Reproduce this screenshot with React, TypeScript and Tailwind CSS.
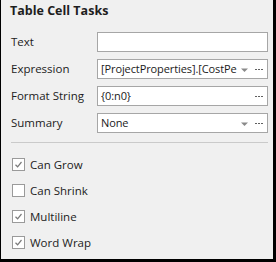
import React from "react";

const font = { fontFamily: '"Open Sans", "Noto Sans", sans-serif' };

const Dots = () => (
  <svg width="8" height="3" viewBox="0 0 8 3" className="shrink-0">
    <rect x="0" y="1" width="2" height="1" fill="#606060" />
    <rect x="3" y="1" width="2" height="1" fill="#606060" />
    <rect x="6" y="1" width="2" height="1" fill="#606060" />
  </svg>
);

const Arrow = () => (
  <svg width="7" height="4" viewBox="0 0 7 4" className="shrink-0">
    <path d="M0 0.5 H7 L3.5 4 Z" fill="#8a8a8a" />
  </svg>
);

const Row = ({
  label,
  value,
  arrow,
  dots,
}: {
  label: string;
  value?: string;
  arrow?: boolean;
  dots?: boolean;
}) => (
  <div className="flex h-[20px] items-center">
    <div className="w-[86px] text-[11.5px] text-[#222]">{label}</div>
    <div className="flex h-[20px] w-[171px] items-center border border-[#a6a6a6] bg-white pl-[3px] pr-[4px]">
      <div className="flex-1 overflow-hidden whitespace-nowrap text-[11px] tracking-[-0.1px] text-[#1a1a1a]">
        {value}
      </div>
      {arrow && (
        <div className="ml-[2px] mr-[7px] mt-[1px]">
          <Arrow />
        </div>
      )}
      {dots && <Dots />}
    </div>
  </div>
);

const Check = ({ label, checked }: { label: string; checked?: boolean }) => (
  <div className="flex h-[13px] items-center">
    <div className="ml-[1px] flex h-[13px] w-[13px] items-center justify-center border border-[#9a9a9a] bg-white">
      {checked && (
        <svg width="9" height="9" viewBox="0 0 9 9">
          <path d="M1.5 4.8 L3.6 6.8 L7.5 2" stroke="#7a7a7a" strokeWidth="1.2" fill="none" />
        </svg>
      )}
    </div>
    <div className="ml-[5px] text-[11.5px] text-[#222]">{label}</div>
  </div>
);

export default function App() {
  return (
    <div
      style={font}
      className="h-[262px] w-[276px] border-b-[3px] border-l border-r-[3px] border-black bg-[#f0f0f0]"
    >
      <div className="pl-[9px] pt-[3px] text-[12.5px] font-bold leading-[16px] text-[#1e1e1e]">
        Table Cell Tasks
      </div>
      <div className="ml-[10px] mt-[13px] flex flex-col gap-[7px]">
        <Row label="Text" />
        <Row label="Expression" value="[ProjectProperties].[CostPe" arrow dots />
        <Row label="Format String" value="{0:n0}" dots />
        <Row label="Summary" value="None" arrow dots />
      </div>
      <div className="ml-[10px] mt-[9px] h-px w-[257px] bg-[#cacaca]" />
      <div className="ml-[10px] mt-[15px] flex flex-col gap-[13px]">
        <Check label="Can Grow" checked />
        <Check label="Can Shrink" />
        <Check label="Multiline" checked />
        <Check label="Word Wrap" checked />
      </div>
    </div>
  );
}
